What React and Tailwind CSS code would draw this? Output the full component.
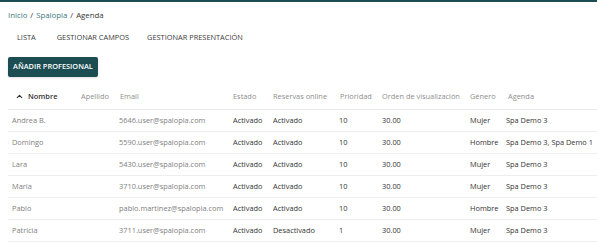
import { ChevronUp } from "lucide-react";

const rows = [
  { nombre: "Andrea B.", email: "5646.user@spalopia.com", estado: "Activado", reservas: "Activado", prioridad: "10", orden: "30.00", genero: "Mujer", agenda: "Spa Demo 3" },
  { nombre: "Domingo", email: "5590.user@spalopia.com", estado: "Activado", reservas: "Activado", prioridad: "10", orden: "30.00", genero: "Hombre", agenda: "Spa Demo 3, Spa Demo 1" },
  { nombre: "Lara", email: "5430.user@spalopia.com", estado: "Activado", reservas: "Activado", prioridad: "10", orden: "30.00", genero: "Mujer", agenda: "Spa Demo 3" },
  { nombre: "María", email: "3710.user@spalopia.com", estado: "Activado", reservas: "Activado", prioridad: "10", orden: "30.00", genero: "Mujer", agenda: "Spa Demo 3" },
  { nombre: "Pablo", email: "pablo.martinez@spalopia.com", estado: "Activado", reservas: "Activado", prioridad: "10", orden: "30.00", genero: "Hombre", agenda: "Spa Demo 3" },
  { nombre: "Patricia", email: "3711.user@spalopia.com", estado: "Activado", reservas: "Desactivado", prioridad: "1", orden: "30.00", genero: "Mujer", agenda: "Spa Demo 3" },
];

const cols = "grid grid-cols-[69px_39px_113px_40px_67px_42px_88px_38px_1fr]";

export default function App() {
  return (
    <div className="w-[597px] h-[243px] overflow-hidden bg-white text-[7.4px] font-['Open_Sans',sans-serif] text-[#333]">
      <div className="h-[2px] bg-[#1d4d52]" />

      {/* migas */}
      <div className="flex gap-[3px] pl-[8px] pt-[8px] h-[26px] text-[7.8px]">
        <span className="text-[#3a7880]">Inicio</span>
        <span>/</span>
        <span className="text-[#3a7880]">Spalopia</span>
        <span>/</span>
        <span>Agenda</span>
      </div>

      {/* pestañas */}
      <div className="flex pl-[17px] h-[29px] pt-[4px] text-[#3a3a3a]">
        <span>LISTA</span>
        <span className="ml-[21px]">GESTIONAR CAMPOS</span>
        <span className="ml-[18px]">GESTIONAR PRESENTACIÓN</span>
      </div>

      <div className="pl-[8px]">
        <button className="h-[20px] px-[5px] rounded-[2px] bg-[#1b4d52] text-white font-semibold shadow-sm">
          AÑADIR PROFESIONAL
        </button>
      </div>

      {/* tabla */}
      <div className="ml-[8px] mt-[8px]">
        <div className={`${cols} h-[25px] items-center border-b border-[#e8e8e8] text-[#8e8e8e] whitespace-nowrap`}>
          <div className="flex items-center gap-[4px] pl-[7px] text-[#333] font-semibold">
            <ChevronUp size={9} strokeWidth={3} />
            <span>Nombre</span>
          </div>
          <div className="pl-[4px]">Apellido</div>
          <div className="pl-[4px]">Email</div>
          <div className="pl-[4px]">Estado</div>
          <div className="pl-[4px]">Reservas online</div>
          <div className="pl-[4px]">Prioridad</div>
          <div className="pl-[4px]">Orden de visualización</div>
          <div className="pl-[4px]">Género</div>
          <div className="pl-[4px]">Agenda</div>
        </div>
        {rows.map((r) => (
          <div key={r.nombre} className={`${cols} h-[22px] items-center border-b border-[#eeeeee] whitespace-nowrap`}>
            <div className="pl-[4px] text-[#808080]">{r.nombre}</div>
            <div className="pl-[4px]" />
            <div className="pl-[3px] text-[#808080]">{r.email}</div>
            <div className="pl-[4px]">{r.estado}</div>
            <div className="pl-[4px]">{r.reservas}</div>
            <div className="pl-[3px]">{r.prioridad}</div>
            <div className="pl-[4px]">{r.orden}</div>
            <div className="pl-[4px]">{r.genero}</div>
            <div className="pl-[2px]">{r.agenda}</div>
          </div>
        ))}
      </div>
    </div>
  );
}
